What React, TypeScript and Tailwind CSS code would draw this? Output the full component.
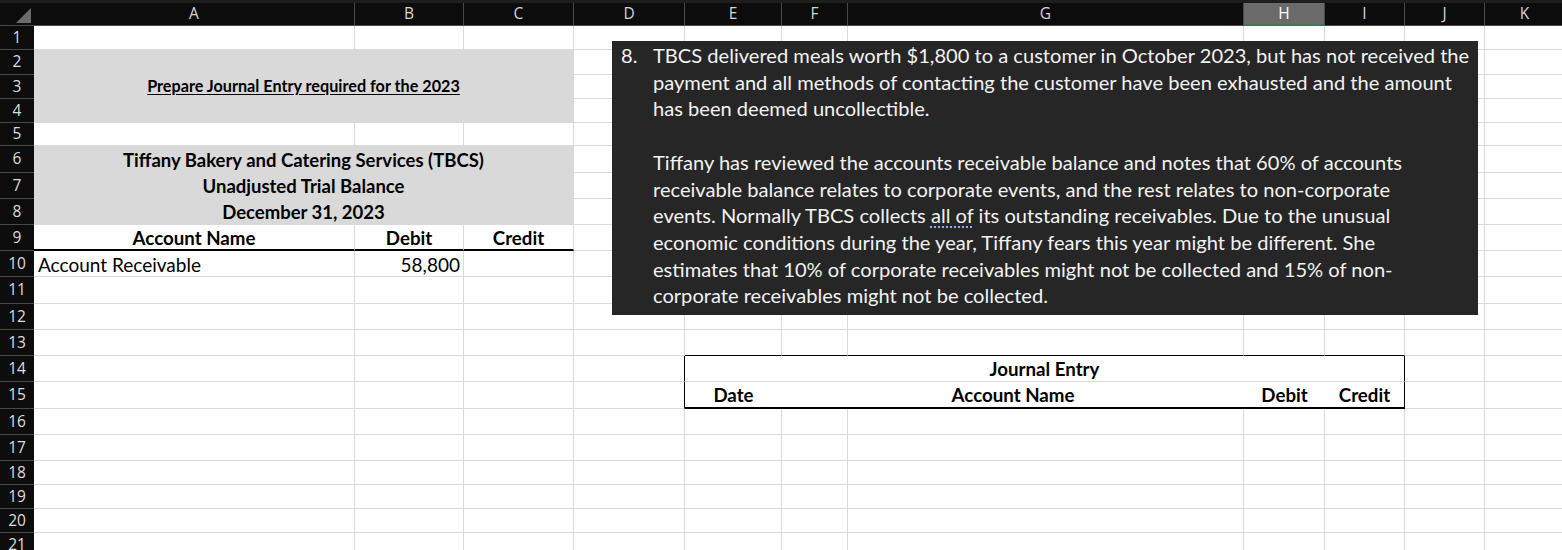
import React from "react"

const COLS = ["A", "B", "C", "D", "E", "F", "G", "H", "I", "J", "K"]

const base = "border-r border-b border-[#dadada]"

function RowHead({ n }: { n: number }) {
  return (
    <div className="flex items-center justify-center border-b border-[#4a4a4a] bg-[#0c0c0c] font-['Open_Sans',sans-serif] text-[15.5px] text-[#dcdcdc]">
      {n}
    </div>
  )
}

function Blank({ n, k }: { n: number; k: string }) {
  return (
    <>
      {Array.from({ length: n }, (_, i) => (
        <div key={`${k}-${i}`} className={base} />
      ))}
    </>
  )
}

function EmptyRow({ n }: { n: number }) {
  return (
    <>
      <RowHead n={n} />
      <Blank n={11} k={`r${n}`} />
    </>
  )
}

export default function App() {
  return (
    <div className="relative h-[550px] w-[1562px] overflow-hidden bg-white font-[Lato,sans-serif] text-black">
      <div className="h-[3px] bg-[#1e1e1e]" />
      <div className="grid grid-cols-[34px_321px_109px_110px_111px_97px_66px_396px_81px_80px_80px_80px] grid-rows-[23px_24px_25px_24px_24px_23px_27px_26px_26px_26px_26px_27px_26px_26px_26px_27px_26px_26px_24px_24px_24px_24px]">
        {/* column headers */}
        <div className="relative border-b border-[#4a4a4a] bg-[#0c0c0c]">
          <svg className="absolute top-[5px] left-[16px]" width="15" height="15" viewBox="0 0 15 15">
            <polygon points="15,0 15,15 0,15" fill="#6b6b6b" />
          </svg>
        </div>
        {COLS.map((c) =>
          c === "H" ? (
            <div
              key={c}
              className="flex items-center justify-center border-r border-b-2 border-r-[#4a4a4a] border-b-[#3f7a58] bg-[#6b6b6b] font-['Open_Sans',sans-serif] text-[15.5px] text-white"
            >
              {c}
            </div>
          ) : (
            <div
              key={c}
              className="flex items-center justify-center border-r border-b border-[#4a4a4a] bg-[#0c0c0c] font-['Open_Sans',sans-serif] text-[15.5px] text-[#d6d6d6]"
            >
              {c}
            </div>
          )
        )}

        <EmptyRow n={1} />

        {/* rows 2-4: title band */}
        <RowHead n={2} />
        <div className="col-span-3 row-span-3 flex items-center justify-center border-r border-b border-r-[#dadada] border-b-[#d9d9d9] bg-[#d9d9d9]">
          <span className="text-[16.2px] font-bold underline underline-offset-2">
            Prepare Journal Entry required for the 2023
          </span>
        </div>
        <Blank n={8} k="r2" />
        <RowHead n={3} />
        <Blank n={8} k="r3" />
        <RowHead n={4} />
        <Blank n={8} k="r4" />

        <EmptyRow n={5} />

        {/* rows 6-8: trial balance heading */}
        {["Tiffany Bakery and Catering Services (TBCS)", "Unadjusted Trial Balance", "December 31, 2023"].map(
          (t, i) => (
            <React.Fragment key={t}>
              <RowHead n={6 + i} />
              <div className="col-span-3 flex items-center justify-center border-r border-b border-r-[#dadada] border-b-[#d9d9d9] bg-[#d9d9d9] pt-[3px] text-[18.5px] font-bold">
                {t}
              </div>
              <Blank n={8} k={`r${6 + i}`} />
            </React.Fragment>
          )
        )}

        {/* row 9 */}
        <RowHead n={9} />
        <div className="flex items-center justify-center border-r border-b-2 border-r-[#dadada] border-b-black pt-[2px] text-[18.7px] font-bold">
          Account Name
        </div>
        <div className="flex items-center justify-center border-r border-b-2 border-r-[#dadada] border-b-black pt-[2px] text-[18.7px] font-bold">
          Debit
        </div>
        <div className="flex items-center justify-center border-r border-b-2 border-r-[#dadada] border-b-black pt-[2px] text-[18.7px] font-bold">
          Credit
        </div>
        <Blank n={8} k="r9" />

        {/* row 10 */}
        <RowHead n={10} />
        <div className={`${base} flex items-center px-[4px] pt-[3px] text-[19px]`}>Account Receivable</div>
        <div className={`${base} flex items-center justify-end px-[3px] pt-[3px] text-[19px]`}>58,800</div>
        <Blank n={9} k="r10" />

        <EmptyRow n={11} />
        <EmptyRow n={12} />

        {/* row 13 — bottom edge forms the top of the journal box */}
        <RowHead n={13} />
        <Blank n={4} k="r13a" />
        {Array.from({ length: 5 }, (_, i) => (
          <div key={`r13b-${i}`} className="border-r border-b border-r-[#dadada] border-b-black" />
        ))}
        <Blank n={2} k="r13c" />

        {/* row 14 */}
        <RowHead n={14} />
        <Blank n={3} k="r14a" />
        <div className="border-r border-b border-r-black border-b-[#dadada]" />
        <div className="col-span-5 flex items-center justify-center border-r border-b border-r-black border-b-[#dadada] pt-[2px] text-[18.7px] font-bold">
          Journal Entry
        </div>
        <Blank n={2} k="r14c" />

        {/* row 15 */}
        <RowHead n={15} />
        <Blank n={3} k="r15a" />
        <div className="border-r border-b border-r-black border-b-[#dadada]" />
        <div className="flex items-center justify-center border-b-2 border-black pt-[2px] text-[18.7px] font-bold">Date</div>
        <div className="col-span-2 flex items-center justify-center border-b-2 border-black pt-[2px] text-[18.7px] font-bold">
          Account Name
        </div>
        <div className="flex items-center justify-center border-b-2 border-black pt-[2px] text-[18.7px] font-bold">Debit</div>
        <div className="flex items-center justify-center border-r border-b-2 border-black pt-[2px] text-[18.7px] font-bold">
          Credit
        </div>
        <Blank n={2} k="r15c" />

        {[16, 17, 18, 19, 20, 21].map((n) => (
          <EmptyRow key={n} n={n} />
        ))}
      </div>

      {/* floating text box */}
      <div className="absolute top-[41px] left-[612px] flex h-[274px] w-[866px] bg-[#262626] pt-[1px] text-[20.1px] leading-[26.7px] text-[#f2f2f2]">
        <div className="w-[41px] pl-[9px]">8.</div>
        <div className="whitespace-nowrap">
          <div>TBCS delivered meals worth $1,800 to a customer in October 2023, but has not received the</div>
          <div>payment and all methods of contacting the customer have been exhausted and the amount</div>
          <div>has been deemed uncollectible.</div>
          <div>&nbsp;</div>
          <div>Tiffany has reviewed the accounts receivable balance and notes that 60% of accounts</div>
          <div>receivable balance relates to corporate events, and the rest relates to non-corporate</div>
          <div>
            events. Normally TBCS collects{" "}
            <span className="underline decoration-[#9aa6ff] decoration-dotted decoration-2 underline-offset-[3px]">all of</span> its
            outstanding receivables. Due to the unusual
          </div>
          <div>economic conditions during the year, Tiffany fears this year might be different. She</div>
          <div>estimates that 10% of corporate receivables might not be collected and 15% of non-</div>
          <div>corporate receivables might not be collected.</div>
        </div>
      </div>
    </div>
  )
}
